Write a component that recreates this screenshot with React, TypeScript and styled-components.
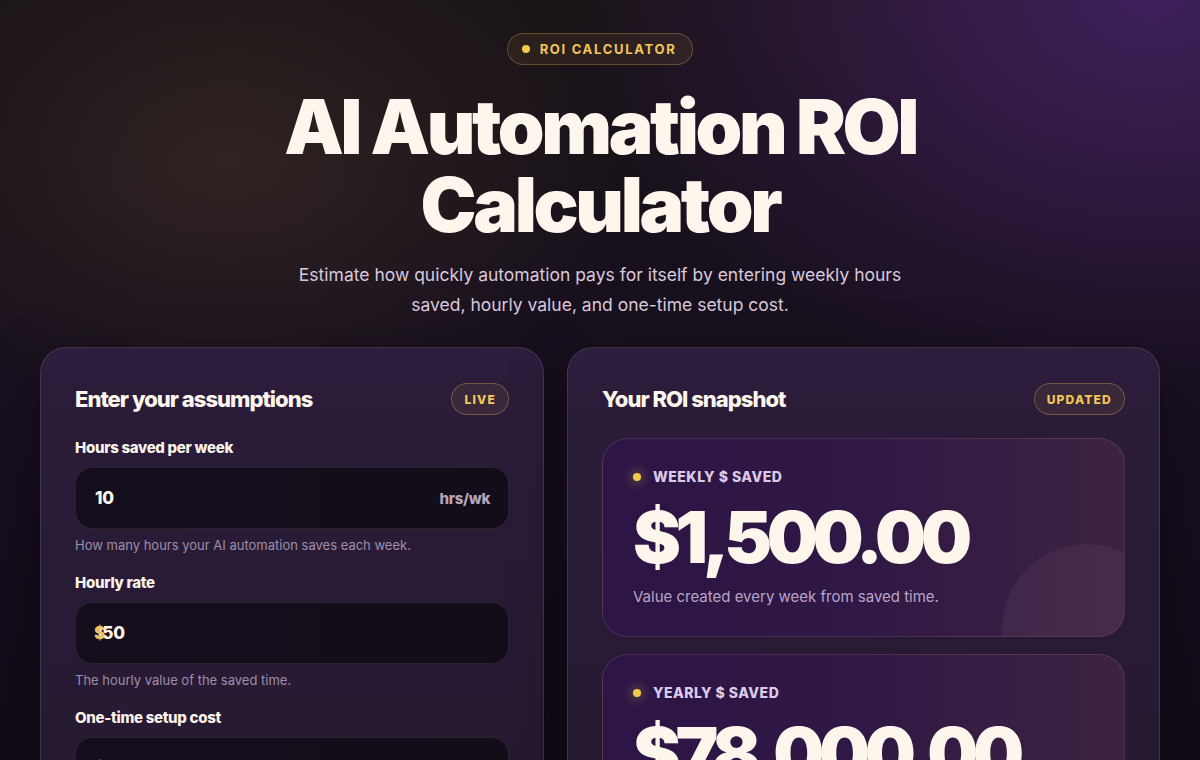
import React, { useState } from "react";
import styled, { createGlobalStyle } from "styled-components";

const GlobalStyle = createGlobalStyle`
  * { box-sizing: border-box; }
  html, body {
    margin: 0;
    padding: 0;
    background: #0e0813;
  }
  body {
    font-family: Inter, "Noto Sans", "Liberation Sans", sans-serif;
    color: #fbf4ea;
    -webkit-font-smoothing: antialiased;
  }
`;

const Page = styled.div`
  min-height: 100vh;
  padding: 33px 40px 60px;
  background:
    radial-gradient(560px 380px at 19% 17%, rgba(96, 70, 48, 0.32), transparent 70%),
    radial-gradient(800px 560px at 96% 0%, rgba(78, 36, 118, 0.72), transparent 72%),
    linear-gradient(180deg, #191317 0%, #170f1f 45%, #0f0915 100%);
`;

const Hero = styled.header`
  display: flex;
  flex-direction: column;
  align-items: center;
  text-align: center;
`;

const Pill = styled.div`
  display: inline-flex;
  align-items: center;
  gap: 10px;
  height: 32px;
  padding: 0 16px 0 14px;
  border-radius: 999px;
  border: 1px solid rgba(245, 196, 81, 0.28);
  background: rgba(120, 90, 50, 0.18);
  color: #f3c659;
  font-size: 13px;
  font-weight: 700;
  letter-spacing: 0.13em;
`;

const Dot = styled.span<{ $glow?: boolean }>`
  width: 8px;
  height: 8px;
  border-radius: 50%;
  background: #f2c94c;
  flex: none;
  box-shadow: ${(p) => (p.$glow ? "0 0 10px 3px rgba(242, 201, 76, 0.25)" : "none")};
`;

const Title = styled.h1`
  margin: 23px 0 0;
  max-width: 760px;
  font-size: 75px;
  line-height: 78px;
  font-weight: 900;
  letter-spacing: -0.045em;
  color: #fdf6ec;
`;

const Subtitle = styled.p`
  margin: 16px 0 0;
  max-width: 640px;
  font-size: 17.5px;
  line-height: 29.5px;
  color: #d9c9de;
  font-weight: 400;
`;

const Grid = styled.main`
  display: grid;
  grid-template-columns: 504px 1fr;
  gap: 23px;
  max-width: 1120px;
  margin: 28px auto 0;
`;

const Card = styled.section`
  border-radius: 26px;
  border: 1px solid rgba(255, 225, 205, 0.13);
  background: linear-gradient(180deg, #2b1d3b 0%, #25182f 100%);
  padding: 35px 34px 34px;
  box-shadow: 0 20px 60px rgba(0, 0, 0, 0.35);
`;

const CardHeader = styled.div`
  display: flex;
  align-items: center;
  justify-content: space-between;
  margin-bottom: 23px;
`;

const CardTitle = styled.h2`
  margin: 0;
  font-size: 22px;
  font-weight: 800;
  letter-spacing: -0.045em;
  color: #fdf6ec;
`;

const Tag = styled.span`
  display: inline-flex;
  align-items: center;
  height: 32px;
  padding: 0 12px;
  border-radius: 999px;
  border: 1px solid rgba(245, 196, 81, 0.3);
  background: rgba(150, 110, 60, 0.14);
  color: #f3c659;
  font-size: 12px;
  font-weight: 800;
  letter-spacing: 0.1em;
`;

const Fields = styled.div`
  display: flex;
  flex-direction: column;
  gap: 19px;
`;

const Field = styled.label`
  display: flex;
  flex-direction: column;
`;

const Label = styled.span`
  font-size: 15px;
  line-height: 20px;
  font-weight: 800;
  color: #fbf3ea;
  letter-spacing: -0.02em;
`;

const InputShell = styled.div`
  position: relative;
  margin-top: 9px;
  display: flex;
  align-items: center;
  height: 62px;
  padding: 0 18px 0 19px;
  border-radius: 17px;
  border: 1px solid rgba(255, 220, 180, 0.11);
  background: linear-gradient(90deg, #140d1b 0%, #130c19 100%);
`;

const Prefix = styled.span`
  position: absolute;
  left: 18px;
  top: 50%;
  transform: translateY(-52%);
  font-size: 17px;
  font-weight: 800;
  color: #f2c453;
  pointer-events: none;
`;

const ValueInput = styled.input`
  flex: 1;
  min-width: 0;
  border: 0;
  outline: none;
  background: transparent;
  padding: 0;
  font-family: inherit;
  font-size: 17px;
  font-weight: 800;
  letter-spacing: -0.01em;
  color: #fdf6ec;
`;

const Suffix = styled.span`
  font-size: 15px;
  font-weight: 800;
  color: #b3a5bd;
  letter-spacing: -0.02em;
`;

const Help = styled.span`
  margin-top: 7px;
  font-size: 13px;
  line-height: 18px;
  color: #9d8ea9;
`;

const Stats = styled.div`
  display: flex;
  flex-direction: column;
  gap: 17px;
`;

const StatCard = styled.div`
  position: relative;
  overflow: hidden;
  border-radius: 26px;
  border: 1px solid rgba(255, 200, 190, 0.14);
  background: linear-gradient(90deg, #2c1545 0%, #2f1845 50%, #3d2241 100%);
  padding: 28px 30px 28px;
`;

const Orb = styled.span`
  position: absolute;
  width: 170px;
  height: 170px;
  right: -48px;
  bottom: -78px;
  border-radius: 50%;
  background: rgba(255, 200, 210, 0.055);
`;

const StatLabel = styled.div`
  position: relative;
  display: flex;
  align-items: center;
  gap: 12px;
  font-size: 14px;
  line-height: 20px;
  font-weight: 800;
  letter-spacing: 0.035em;
  color: #dccaea;
`;

const StatValue = styled.div`
  position: relative;
  margin-top: 12px;
  font-size: 72px;
  line-height: 76px;
  font-weight: 900;
  letter-spacing: -0.075em;
  color: #fdf6ec;
`;

const StatDesc = styled.div`
  position: relative;
  margin-top: 11px;
  font-size: 15px;
  line-height: 22px;
  color: #b8a5c8;
`;

const fmt = (n: number) =>
  "$" +
  n.toLocaleString("en-US", { minimumFractionDigits: 2, maximumFractionDigits: 2 });

export default function App() {
  const [hours, setHours] = useState("10");
  const [rate, setRate] = useState("150");
  const [setup, setSetup] = useState("2000");

  const weekly = (parseFloat(hours) || 0) * (parseFloat(rate) || 0);
  const yearly = weekly * 52;

  return (
    <>
      <GlobalStyle />
      <Page>
        <Hero>
          <Pill>
            <Dot />
            ROI CALCULATOR
          </Pill>
          <Title>AI Automation ROI Calculator</Title>
          <Subtitle>
            Estimate how quickly automation pays for itself by entering weekly hours
            saved, hourly value, and one-time setup cost.
          </Subtitle>
        </Hero>
        <Grid>
          <Card>
            <CardHeader>
              <CardTitle>Enter your assumptions</CardTitle>
              <Tag>LIVE</Tag>
            </CardHeader>
            <Fields>
              <Field>
                <Label>Hours saved per week</Label>
                <InputShell>
                  <ValueInput value={hours} onChange={(e) => setHours(e.target.value)} />
                  <Suffix>hrs/wk</Suffix>
                </InputShell>
                <Help>How many hours your AI automation saves each week.</Help>
              </Field>
              <Field>
                <Label>Hourly rate</Label>
                <InputShell>
                  <ValueInput value={rate} onChange={(e) => setRate(e.target.value)} />
                  <Prefix>$</Prefix>
                </InputShell>
                <Help>The hourly value of the saved time.</Help>
              </Field>
              <Field>
                <Label>One-time setup cost</Label>
                <InputShell>
                  <ValueInput value={setup} onChange={(e) => setSetup(e.target.value)} />
                  <Prefix>$</Prefix>
                </InputShell>
                <Help>What it costs to build and launch the automation.</Help>
              </Field>
            </Fields>
          </Card>
          <Card>
            <CardHeader>
              <CardTitle>Your ROI snapshot</CardTitle>
              <Tag>UPDATED</Tag>
            </CardHeader>
            <Stats>
              <StatCard>
                <Orb />
                <StatLabel>
                  <Dot $glow />
                  WEEKLY $ SAVED
                </StatLabel>
                <StatValue>{fmt(weekly)}</StatValue>
                <StatDesc>Value created every week from saved time.</StatDesc>
              </StatCard>
              <StatCard>
                <Orb />
                <StatLabel>
                  <Dot $glow />
                  YEARLY $ SAVED
                </StatLabel>
                <StatValue>{fmt(yearly)}</StatValue>
                <StatDesc>Projected value across 52 working weeks.</StatDesc>
              </StatCard>
            </Stats>
          </Card>
        </Grid>
      </Page>
    </>
  );
}
